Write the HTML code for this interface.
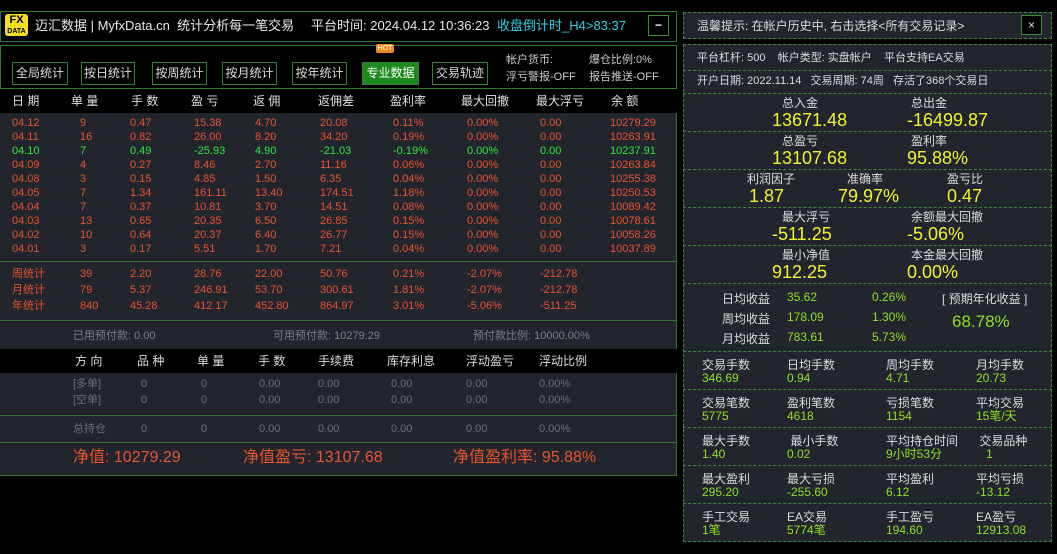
<!DOCTYPE html><html><head><meta charset="utf-8"><style>
*{margin:0;padding:0;box-sizing:border-box}
body{width:1057px;height:554px;background:#000;position:relative;overflow:hidden;font-family:"Liberation Sans","Noto Sans CJK SC",sans-serif;font-size:12px;color:#ddd}
.a{position:absolute;white-space:nowrap;line-height:14px;z-index:2}
.box{position:absolute;border:1px solid #2f7a2f}
.btn{position:absolute;top:62px;height:23px;border:1px solid #3a7a3a;color:#ddd;font-size:12px;line-height:21px;text-align:center;background:#000}
.r{color:#e8542c}.g{color:#2ee83a}.gy{color:#7d7f85}
.d{position:absolute;border:1px dashed #3a8a3a}
.hl{position:absolute;left:683px;width:369px;border-top:1px dashed #3a8a3a}
.y{color:#f2f230;font-size:18px;line-height:20px}
.lg{color:#8fe024}
.bg{position:absolute;z-index:1}
</style></head><body>
<div class="box" style="left:0;top:11px;width:677px;height:31px"></div>
<div class="a" style="left:5px;top:14px;width:23px;height:22px;background:#f5e020;border-radius:3px;color:#000;font-weight:bold;text-align:center;line-height:10px;font-size:11px;padding-top:1px">FX<br><span style="font-size:7px">DATA</span></div>
<div class="a" style="left:35px;top:18px;font-size:13px;line-height:15px;color:#e8e8e8">迈汇数据 | MyfxData.cn&nbsp; 统计分析每一笔交易</div>
<div class="a" style="left:311px;top:18px;font-size:13px;line-height:15px;color:#e8e8e8">平台时间: 2024.04.12 10:36:23</div>
<div class="a" style="left:497px;top:18px;font-size:13px;line-height:15px;color:#2ed0e8">收盘倒计时_H4>83:37</div>
<div class="a" style="left:648px;top:15px;width:21px;height:21px;border:1px solid #3a8a3a;color:#fff;text-align:center;line-height:18px;font-weight:bold">−</div>
<div class="box" style="left:0;top:45px;width:677px;height:44px"></div>
<div class="btn" style="left:12px;width:56px">全局统计</div>
<div class="btn" style="left:81px;width:54px">按日统计</div>
<div class="btn" style="left:152px;width:55px">按周统计</div>
<div class="btn" style="left:222px;width:55px">按月统计</div>
<div class="btn" style="left:292px;width:55px">按年统计</div>
<div class="btn" style="left:362px;width:57px;background:#1d8a1d;color:#fff">专业数据</div>
<div class="btn" style="left:432px;width:56px">交易轨迹</div>
<div class="a" style="left:376px;top:44px;width:18px;height:9px;background:#f08a1a;border-radius:2px;font-size:7px;color:#fff;text-align:center;line-height:9px">HOT</div>
<div class="a" style="left:506px;top:52px;font-size:11px;color:#ccc;line-height:17px">帐户货币:<br>浮亏警报-OFF</div>
<div class="a" style="left:589px;top:52px;font-size:11px;color:#ccc;line-height:17px">爆仓比例:0%<br>报告推送-OFF</div>
<div class="bg" style="left:0;top:113px;width:677px;height:363px;background:#22252d;border-right:1px solid #2f7a2f;border-bottom:1px solid #2f7a2f"></div>
<div class="bg" style="left:0;top:261px;width:677px;border-top:1px solid #2f7a2f"></div>
<div class="bg" style="left:0;top:320px;width:677px;border-top:1px solid #2f7a2f"></div>
<div class="bg" style="left:0;top:349px;width:677px;height:24px;background:#000"></div>
<div class="bg" style="left:0;top:415px;width:677px;border-top:1px solid #2f7a2f"></div>
<div class="bg" style="left:0;top:442px;width:677px;border-top:1px solid #2f7a2f"></div>
<div class="a" style="left:75px;top:354px">方 向</div>
<div class="a" style="left:137px;top:354px">品 种</div>
<div class="a" style="left:197px;top:354px">单 量</div>
<div class="a" style="left:258px;top:354px">手 数</div>
<div class="a" style="left:318px;top:354px">手续费</div>
<div class="a" style="left:387px;top:354px">库存利息</div>
<div class="a" style="left:466px;top:354px">浮动盈亏</div>
<div class="a" style="left:539px;top:354px">浮动比例</div>
<div id="hdr"></div>
<div id="rows"></div>
<div class="a gy" style="left:73px;top:329px;font-size:11px">已用预付款: 0.00</div>
<div class="a gy" style="left:273px;top:329px;font-size:11px">可用预付款: 10279.29</div>
<div class="a gy" style="left:473px;top:329px;font-size:11px">预付款比例: 10000.00%</div>
<div class="a r" style="left:73px;top:449px;font-size:16px;line-height:18px">净值: 10279.29</div>
<div class="a r" style="left:243px;top:449px;font-size:16px;line-height:18px">净值盈亏: 13107.68</div>
<div class="a r" style="left:453px;top:449px;font-size:16px;line-height:18px">净值盈利率: 95.88%</div>
<div class="d" style="left:683px;top:12px;width:369px;height:27px;background:#22252d"></div>
<div class="a" style="left:697px;top:19px;color:#ddd">温馨提示: 在帐户历史中, 右击选择&lt;所有交易记录&gt;</div>
<div class="a" style="left:1021px;top:15px;width:21px;height:20px;border:1px solid #3a8a3a;color:#ddd;text-align:center;line-height:18px;background:#000">×</div>
<div class="d" style="left:683px;top:44px;width:369px;height:498px;background:#22252d"></div>
<div class="a" style="left:697px;top:51px;color:#ddd;font-size:11px">平台杠杆: 500 &nbsp;&nbsp; 帐户类型: 实盘帐户 &nbsp;&nbsp; 平台支持EA交易</div>
<div class="hl" style="top:70px"></div>
<div class="a" style="left:697px;top:74px;color:#ddd;font-size:11px">开户日期: 2022.11.14 &nbsp;&nbsp;交易周期: 74周 &nbsp;&nbsp;存活了368个交易日</div>
<div class="hl" style="top:93px"></div>
<div id="rp"></div>
<script>
let h='';['日 期','单 量','手 数','盈 亏','返 佣','返佣差','盈利率','最大回撤','最大浮亏','余 额'].forEach((t,i)=>{const x=[12,71,131,191,253,318,390,461,536,611][i];h+=`<span class="a" style="left:${x}px;top:94px;color:#e0e0e0">${t}</span>`});
document.getElementById('hdr').innerHTML=h;
const D=[["04.12",9,"0.47","15.38","4.70","20.08","0.11%","0.00%","0.00","10279.29"],["04.11",16,"0.82","26.00","8.20","34.20","0.19%","0.00%","0.00","10263.91"],["04.10",7,"0.49","-25.93","4.90","-21.03","-0.19%","0.00%","0.00","10237.91"],["04.09",4,"0.27","8.46","2.70","11.16","0.06%","0.00%","0.00","10263.84"],["04.08",3,"0.15","4.85","1.50","6.35","0.04%","0.00%","0.00","10255.38"],["04.05",7,"1.34","161.11","13.40","174.51","1.18%","0.00%","0.00","10250.53"],["04.04",7,"0.37","10.81","3.70","14.51","0.08%","0.00%","0.00","10089.42"],["04.03",13,"0.65","20.35","6.50","26.85","0.15%","0.00%","0.00","10078.61"],["04.02",10,"0.64","20.37","6.40","26.77","0.15%","0.00%","0.00","10058.26"],["04.01",3,"0.17","5.51","1.70","7.21","0.04%","0.00%","0.00","10037.89"]];
let r='';
const X=[12,80,130,194,255,320,393,467,540,610];
D.forEach((row,j)=>{const cl=j==2?'g':'r';row.forEach((v,i)=>{r+=`<span class="a ${cl}" style="left:${X[i]}px;top:${116+j*14}px;font-size:11px">${v}</span>`})});
const S=[["周统计",39,"2.20","28.76","22.00","50.76","0.21%","-2.07%","-212.78"],["月统计",79,"5.37","246.91","53.70","300.61","1.81%","-2.07%","-212.78"],["年统计",840,"45.28","412.17","452.80","864.97","3.01%","-5.06%","-511.25"]];
S.forEach((row,j)=>{row.forEach((v,i)=>{r+=`<span class="a r" style="left:${X[i]}px;top:${267+j*16}px;font-size:11px">${v}</span>`})});
[["[多单]",377],["[空单]",393],["总持仓",422]].forEach(([n,y])=>{[n,"0","0","0.00","0.00","0.00","0.00","0.00%"].forEach((v,i)=>{const x=[73,141,201,259,318,391,466,539][i];r+=`<span class="a" style="left:${x}px;top:${y}px;font-size:11px;color:#6e7078">${v}</span>`})});
document.getElementById('rows').innerHTML=r;
let p='';
function two(y,a,av,b,bv){p+=`<span class="a" style="left:782px;top:${y}px;color:#ddd">${a}</span><span class="a y" style="left:772px;top:${y+14}px">${av}</span><span class="a" style="left:911px;top:${y}px;color:#ddd">${b}</span><span class="a y" style="left:907px;top:${y+14}px">${bv}</span><div class="hl" style="top:${y+35}px"></div>`}
two(96,"总入金","13671.48","总出金","-16499.87");
two(134,"总盈亏","13107.68","盈利率","95.88%");
p+=`<span class="a" style="left:747px;top:172px;color:#ddd">利润因子</span><span class="a y" style="left:749px;top:186px">1.87</span><span class="a" style="left:847px;top:172px;color:#ddd">准确率</span><span class="a y" style="left:838px;top:186px">79.97%</span><span class="a" style="left:947px;top:172px;color:#ddd">盈亏比</span><span class="a y" style="left:947px;top:186px">0.47</span><div class="hl" style="top:207px"></div>`;
two(210,"最大浮亏","-511.25","余额最大回撤","-5.06%");
two(248,"最小净值","912.25","本金最大回撤","0.00%");
[["日均收益","35.62","0.26%",292],["周均收益","178.09","1.30%",312],["月均收益","783.61","5.73%",332]].forEach(([a,b,c,y])=>{p+=`<span class="a" style="left:722px;top:${y}px;color:#ddd">${a}</span><span class="a lg" style="left:787px;top:${y-2}px">${b}</span><span class="a lg" style="left:872px;top:${y-2}px">${c}</span>`});
p+=`<span class="a" style="left:942px;top:292px;color:#ddd">[ 预期年化收益 ]</span><span class="a lg" style="left:952px;top:312px;font-size:17px;line-height:20px">68.78%</span><div class="hl" style="top:351px"></div>`;
const G=[[["交易手数","346.69"],["日均手数","0.94"],["周均手数","4.71"],["月均手数","20.73"]],[["交易笔数","5775"],["盈利笔数","4618"],["亏损笔数","1154"],["平均交易","15笔/天"]],[["最大手数","1.40"],[" 最小手数","0.02"],["平均持仓时间","9小时53分"],[" 交易品种","&nbsp;&nbsp; 1"]],[["最大盈利","295.20"],["最大亏损","-255.60"],["平均盈利","6.12"],["平均亏损","-13.12"]],[["手工交易","1笔"],["EA交易","5774笔"],["手工盈亏","194.60"],["EA盈亏","12913.08"]]];
G.forEach((row,j)=>{const y=358+j*38;row.forEach(([a,b],i)=>{const x=[702,787,886,976][i];p+=`<span class="a" style="left:${x}px;top:${y}px;color:#ddd;white-space:pre">${a}</span><span class="a lg" style="left:${x}px;top:${y+13}px">${b}</span>`});if(j<4)p+=`<div class="hl" style="top:${y+31}px"></div>`});
document.getElementById('rp').innerHTML=p;
</script>
</body></html>
